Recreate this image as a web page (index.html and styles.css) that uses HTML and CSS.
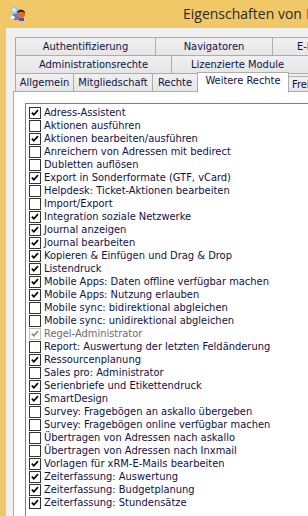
FILE: index.html
```html
<!DOCTYPE html>
<html lang="de">
<head>
<meta charset="utf-8">
<title>Eigenschaften</title>
<link rel="stylesheet" href="styles.css">
</head>
<body>
<div class="titlebar">
  <svg class="app-icon" width="16" height="16" viewBox="0 0 16 16">
    <circle cx="5" cy="5" r="4" fill="#8cc8f0"/>
    <circle cx="4" cy="4" r="2" fill="#d8eefc"/>
    <rect x="3" y="8" width="6" height="6" rx="1" fill="#6a6ad8"/>
    <rect x="0.5" y="10" width="4" height="3" fill="#ffffff" stroke="#c0c0c0" stroke-width="0.5"/>
    <circle cx="11" cy="8" r="4.2" fill="#e07020"/>
    <path d="M7 6 Q11 1 15 6 L15 7 Q11 4 7 7 Z" fill="#1a1a1a"/>
    <rect x="9" y="12" width="5" height="3" fill="#5050c0"/>
  </svg>
  <span class="title">Eigenschaften von <span class="title-accent">I</span></span>
</div>
<div class="client">
  <div class="tabrow">
    <div class="tab t-auth">Authentifizierung</div>
    <div class="tab t-nav">Navigatoren</div>
    <div class="tab t-mail">E-Mail</div>
  </div>
  <div class="tabrow">
    <div class="tab t-admin">Administrationsrechte</div>
    <div class="tab t-lic">Lizenzierte Module</div>
  </div>
  <div class="tabrow tabrow-front">
    <div class="tab t-allg">Allgemein</div>
    <div class="tab t-mitg">Mitgliedschaft</div>
    <div class="tab t-rechte">Rechte</div>
    <div class="tab tab-selected t-weitere">Weitere Rechte</div>
    <div class="tab tab-low t-frei">Freigaben</div>
  </div>
  <div class="panel">
    <div class="listbox">
      <div class="item"><span class="cb"><svg viewBox="0 0 12 12"><polyline points="2.2,5.6 4.6,8.2 9.6,2.6"/></svg></span><span>Adress-Assistent</span></div>
      <div class="item"><span class="cb"></span><span>Aktionen ausführen</span></div>
      <div class="item"><span class="cb"><svg viewBox="0 0 12 12"><polyline points="2.2,5.6 4.6,8.2 9.6,2.6"/></svg></span><span>Aktionen bearbeiten/ausführen</span></div>
      <div class="item"><span class="cb"></span><span>Anreichern von Adressen mit bedirect</span></div>
      <div class="item"><span class="cb"></span><span>Dubletten auflösen</span></div>
      <div class="item"><span class="cb"><svg viewBox="0 0 12 12"><polyline points="2.2,5.6 4.6,8.2 9.6,2.6"/></svg></span><span>Export in Sonderformate (GTF, vCard)</span></div>
      <div class="item"><span class="cb"></span><span>Helpdesk: Ticket-Aktionen bearbeiten</span></div>
      <div class="item"><span class="cb"></span><span>Import/Export</span></div>
      <div class="item"><span class="cb"><svg viewBox="0 0 12 12"><polyline points="2.2,5.6 4.6,8.2 9.6,2.6"/></svg></span><span>Integration soziale Netzwerke</span></div>
      <div class="item"><span class="cb"><svg viewBox="0 0 12 12"><polyline points="2.2,5.6 4.6,8.2 9.6,2.6"/></svg></span><span>Journal anzeigen</span></div>
      <div class="item"><span class="cb"><svg viewBox="0 0 12 12"><polyline points="2.2,5.6 4.6,8.2 9.6,2.6"/></svg></span><span>Journal bearbeiten</span></div>
      <div class="item"><span class="cb"><svg viewBox="0 0 12 12"><polyline points="2.2,5.6 4.6,8.2 9.6,2.6"/></svg></span><span>Kopieren &amp; Einfügen und Drag &amp; Drop</span></div>
      <div class="item"><span class="cb"><svg viewBox="0 0 12 12"><polyline points="2.2,5.6 4.6,8.2 9.6,2.6"/></svg></span><span>Listendruck</span></div>
      <div class="item"><span class="cb"><svg viewBox="0 0 12 12"><polyline points="2.2,5.6 4.6,8.2 9.6,2.6"/></svg></span><span>Mobile Apps: Daten offline verfügbar machen</span></div>
      <div class="item"><span class="cb"><svg viewBox="0 0 12 12"><polyline points="2.2,5.6 4.6,8.2 9.6,2.6"/></svg></span><span>Mobile Apps: Nutzung erlauben</span></div>
      <div class="item"><span class="cb"></span><span>Mobile sync: bidirektional abgleichen</span></div>
      <div class="item"><span class="cb"></span><span>Mobile sync: unidirektional abgleichen</span></div>
      <div class="item item-disabled"><span class="cb"><svg viewBox="0 0 12 12"><polyline points="2.2,5.6 4.6,8.2 9.6,2.6"/></svg></span><span>Regel-Administrator</span></div>
      <div class="item"><span class="cb"></span><span>Report: Auswertung der letzten Feldänderung</span></div>
      <div class="item"><span class="cb"><svg viewBox="0 0 12 12"><polyline points="2.2,5.6 4.6,8.2 9.6,2.6"/></svg></span><span>Ressourcenplanung</span></div>
      <div class="item"><span class="cb"></span><span>Sales pro: Administrator</span></div>
      <div class="item"><span class="cb"><svg viewBox="0 0 12 12"><polyline points="2.2,5.6 4.6,8.2 9.6,2.6"/></svg></span><span>Serienbriefe und Etikettendruck</span></div>
      <div class="item"><span class="cb"><svg viewBox="0 0 12 12"><polyline points="2.2,5.6 4.6,8.2 9.6,2.6"/></svg></span><span>SmartDesign</span></div>
      <div class="item"><span class="cb"></span><span>Survey: Fragebögen an askallo übergeben</span></div>
      <div class="item"><span class="cb"></span><span>Survey: Fragebögen online verfügbar machen</span></div>
      <div class="item"><span class="cb"></span><span>Übertragen von Adressen nach askallo</span></div>
      <div class="item"><span class="cb"></span><span>Übertragen von Adressen nach Inxmail</span></div>
      <div class="item"><span class="cb"><svg viewBox="0 0 12 12"><polyline points="2.2,5.6 4.6,8.2 9.6,2.6"/></svg></span><span>Vorlagen für xRM-E-Mails bearbeiten</span></div>
      <div class="item"><span class="cb"><svg viewBox="0 0 12 12"><polyline points="2.2,5.6 4.6,8.2 9.6,2.6"/></svg></span><span>Zeiterfassung: Auswertung</span></div>
      <div class="item"><span class="cb"><svg viewBox="0 0 12 12"><polyline points="2.2,5.6 4.6,8.2 9.6,2.6"/></svg></span><span>Zeiterfassung: Budgetplanung</span></div>
      <div class="item"><span class="cb"><svg viewBox="0 0 12 12"><polyline points="2.2,5.6 4.6,8.2 9.6,2.6"/></svg></span><span>Zeiterfassung: Stundensätze</span></div>
    </div>
  </div>
</div>
</body>
</html>
```

FILE: styles.css
```css
html, body {
  margin: 0;
  padding: 0;
}
body {
  width: 308px;
  height: 516px;
  overflow: hidden;
  background: #f0c868;
  font-family: "DejaVu Sans Condensed", "DejaVu Sans", sans-serif;
  font-size: 11px;
  color: #10104a;
}
.titlebar {
  height: 28px;
  display: flex;
  align-items: center;
  white-space: nowrap;
}
.app-icon {
  margin-left: 10px;
  flex: none;
}
.title {
  margin-left: 157px;
  font-family: "Open Sans", "Noto Sans", sans-serif;
  font-size: 14px;
  color: #2a2a2a;
  line-height: 28px;
}
.title-accent {
  color: #d8682a;
}
.client {
  margin-left: 6px;
  height: 488px;
  background: #f0f0f0;
  padding: 9px 0 0 7px;
  box-sizing: border-box;
  overflow: hidden;
}
.tabrow {
  display: flex;
  align-items: flex-end;
  height: 19px;
  margin-left: 2px;
  white-space: nowrap;
}
.tabrow + .tabrow {
  margin-top: -1px;
}
.tab {
  flex: none;
  box-sizing: border-box;
  height: 19px;
  border: 1px solid #acacac;
  background: linear-gradient(#f0f0f0, #e6e6e6);
  text-align: center;
  line-height: 17px;
  overflow: hidden;
}
.tab + .tab {
  margin-left: -1px;
}
.t-auth { width: 141px; }
.t-nav { width: 118px; }
.t-mail { width: 80px; text-align: left; padding-left: 24px; }
.t-admin { width: 157px; }
.t-lic { width: 160px; padding-right: 27px; }
.t-allg { width: 59px; }
.t-mitg { width: 80px; }
.t-rechte { width: 46px; }
.t-weitere { width: 92px; }
.t-frei { width: 60px; text-align: left; padding-left: 3px; }
.tab-selected {
  height: 21px;
  background: #ffffff;
  border-bottom-color: #ffffff;
  position: relative;
  top: 1px;
  z-index: 1;
  line-height: 16px;
}
.tab-low {
  height: 16px;
  line-height: 15px;
}
.panel {
  margin-top: -1px;
  height: 420px;
  background: #ffffff;
  border-left: 1px solid #acacac;
  border-top: 1px solid #acacac;
  padding: 11px 0 0 11px;
}
.listbox {
  border: 1px solid #7f7f7f;
  border-right: none;
  background: #ffffff;
  height: 420px;
  padding: 2px 0 0 3px;
}
.item {
  display: flex;
  align-items: center;
  height: 13px;
  white-space: nowrap;
}
.cb {
  flex: none;
  width: 12px;
  height: 12px;
  box-sizing: border-box;
  border: 1px solid #333333;
  background: #ffffff;
  margin-right: 3px;
  display: flex;
}
.cb svg {
  width: 10px;
  height: 10px;
}
.cb polyline {
  fill: none;
  stroke: #000000;
  stroke-width: 2;
}
.item-disabled {
  color: #6d6d6d;
}
.item-disabled .cb {
  border-color: #bcbcbc;
}
.item-disabled .cb polyline {
  stroke: #8a8a8a;
}
```
